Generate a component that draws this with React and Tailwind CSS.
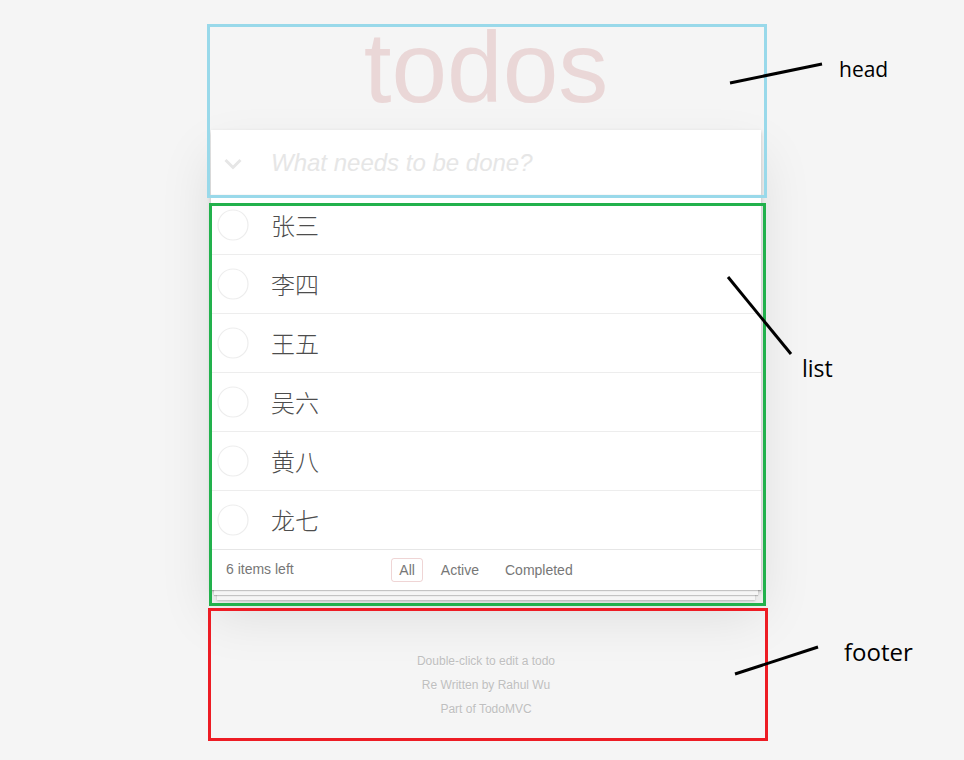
const TODOS = ['张三', '李四', '王五', '吴六', '黄八', '龙七'];

const FILTERS = ['All', 'Active', 'Completed'];

function Chevron() {
  return (
    <svg width="18" height="12" viewBox="0 0 18 12" fill="none">
      <polyline points="1.5,2 9,9.5 16.5,2" stroke="#e6e6e6" strokeWidth="3" />
    </svg>
  );
}

function Circle() {
  return (
    <svg width="32" height="32" viewBox="0 0 32 32" fill="none">
      <circle cx="16" cy="16" r="15" stroke="#ededed" strokeWidth="1.2" />
    </svg>
  );
}

function TodoApp() {
  return (
    <div className="ml-[211px] w-[550px] pt-[17px] font-['Liberation_Sans',Arial,sans-serif]">
      <h1 className="text-center text-[100px] leading-[100px] text-[rgba(175,47,47,0.15)]">todos</h1>

      <section className="mt-[13px] bg-white shadow-[0_2px_4px_0_rgba(0,0,0,0.2),0_25px_50px_0_rgba(0,0,0,0.1)]">
        <div className="flex h-[66px] items-center shadow-[inset_0_-2px_1px_rgba(0,0,0,0.03)]">
          <span className="flex w-[44px] justify-center pt-[2px]">
            <Chevron />
          </span>
          <input
            className="flex-1 bg-transparent pl-4 text-[24px] text-[#4d4d4d] outline-none placeholder:italic placeholder:text-[#e6e6e6]"
            placeholder="What needs to be done?"
          />
        </div>

        <ul>
          {TODOS.map((t, i) => (
            <li
              key={t}
              className={
                i === TODOS.length - 1
                  ? 'flex h-[58px] items-center'
                  : 'flex h-[59px] items-center border-b border-[#ededed]'
              }
            >
              <span className="flex w-[44px] justify-center">
                <Circle />
              </span>
              <span className="pl-4 font-['Noto_Sans_CJK_SC',sans-serif] text-[24px] font-light leading-[1.2] text-[#4d4d4d]">
                {t}
              </span>
            </li>
          ))}
        </ul>

        <footer className="relative flex h-[41px] items-center border-t border-[#e6e6e6] px-[15px] pb-[1px] text-[14px] text-[#777] shadow-[0_1px_1px_rgba(0,0,0,0.2),0_8px_0_-3px_#f6f6f6,0_9px_1px_-3px_rgba(0,0,0,0.2),0_16px_0_-6px_#f6f6f6,0_17px_2px_-6px_rgba(0,0,0,0.2)]">
          <span>6 items left</span>
          <ul className="absolute inset-x-0 top-0 flex h-full items-center justify-center gap-[4px] pb-[1px]">
            {FILTERS.map((f) => (
              <li key={f}>
                <a
                  className={
                    f === 'All'
                      ? 'mx-[3px] block rounded-[3px] border border-[rgba(175,47,47,0.2)] px-[7px] py-[3px] leading-4'
                      : 'mx-[3px] block rounded-[3px] border border-transparent px-[7px] py-[3px] leading-4'
                  }
                >
                  {f}
                </a>
              </li>
            ))}
          </ul>
        </footer>
      </section>

      <div className="mt-[59px] text-center text-[12px] leading-6 text-[#bfbfbf] [text-shadow:0_1px_0_rgba(255,255,255,0.5)]">
        <p>Double-click to edit a todo</p>
        <p>Re Written by Rahul Wu</p>
        <p>Part of TodoMVC</p>
      </div>
    </div>
  );
}

function Annotations() {
  return (
    <>
      <div className="absolute left-[207px] top-[24px] h-[174px] w-[560px] border-[3px] border-[#99d9ea]" />
      <div className="absolute left-[209px] top-[203px] h-[403px] w-[557px] border-[3px] border-[#22b14c]" />
      <div className="absolute left-[208px] top-[608px] h-[133px] w-[560px] border-[3px] border-[#ed1c24]" />

      <svg className="absolute left-0 top-0" width="964" height="760">
        <line x1="730" y1="83" x2="822" y2="64" stroke="#000" strokeWidth="3" />
        <line x1="728" y1="277" x2="791" y2="354" stroke="#000" strokeWidth="3" />
        <line x1="735" y1="674" x2="818" y2="647" stroke="#000" strokeWidth="3" />
      </svg>

      <span className="absolute left-[839px] top-[59px] font-['Open_Sans',sans-serif] text-[21px] leading-none text-black">
        head
      </span>
      <span className="absolute left-[802px] top-[357px] font-['Open_Sans',sans-serif] text-[23px] leading-none text-black">
        list
      </span>
      <span className="absolute left-[844px] top-[640px] font-['Open_Sans',sans-serif] text-[24px] leading-none text-black">
        footer
      </span>
    </>
  );
}

export default function App() {
  return (
    <div className="relative h-[760px] w-[964px] overflow-hidden bg-[#f5f5f5]">
      <TodoApp />
      <Annotations />
    </div>
  );
}
